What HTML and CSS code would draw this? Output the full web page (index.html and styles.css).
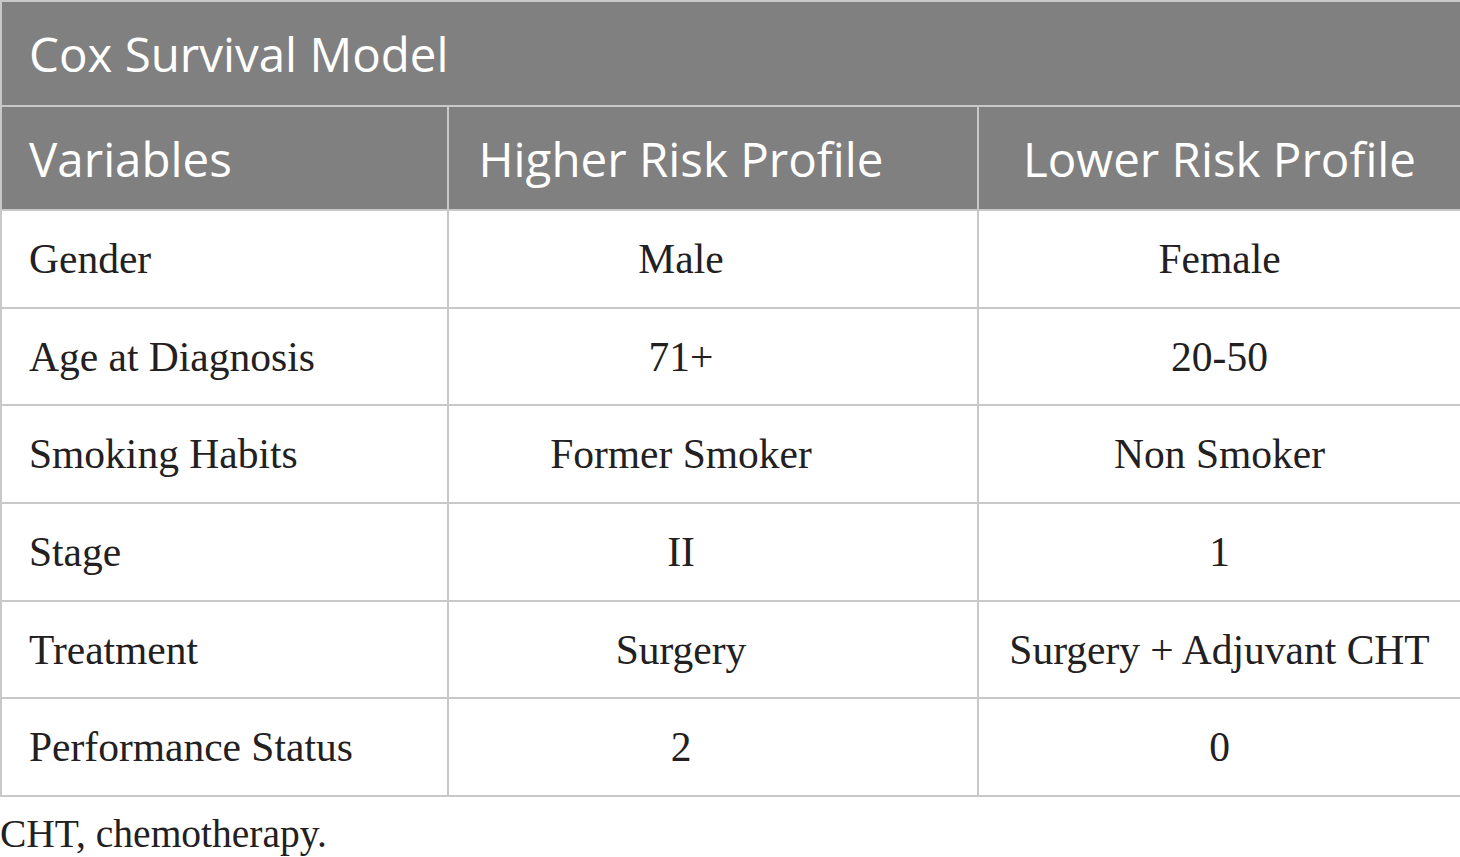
FILE: index.html
```html
<!DOCTYPE html>
<html>
<head>
<meta charset="utf-8">
<link rel="stylesheet" href="styles.css">
</head>
<body>
<table class="cox">
  <colgroup>
    <col class="c1"><col class="c2"><col class="c3">
  </colgroup>
  <thead>
    <tr class="title-row"><th colspan="3" class="title">Cox Survival Model</th></tr>
    <tr class="head-row">
      <th class="left">Variables</th>
      <th class="mid">Higher Risk Profile</th>
      <th class="right">Lower Risk Profile</th>
    </tr>
  </thead>
  <tbody>
    <tr><td class="left">Gender</td><td class="mid">Male</td><td class="right">Female</td></tr>
    <tr><td class="left">Age at Diagnosis</td><td class="mid">71+</td><td class="right">20-50</td></tr>
    <tr><td class="left">Smoking Habits</td><td class="mid">Former Smoker</td><td class="right">Non Smoker</td></tr>
    <tr><td class="left">Stage</td><td class="mid">II</td><td class="right">1</td></tr>
    <tr><td class="left">Treatment</td><td class="mid">Surgery</td><td class="right">Surgery + Adjuvant CHT</td></tr>
    <tr><td class="left">Performance Status</td><td class="mid">2</td><td class="right">0</td></tr>
  </tbody>
</table>
<p class="note">CHT, chemotherapy.</p>
</body>
</html>
```
FILE: styles.css
```css
html, body {
  margin: 0;
  padding: 0;
  background: #ffffff;
}
.cox {
  width: 1460px;
  border-collapse: collapse;
  table-layout: fixed;
  margin: 0;
}
.c1 { width: 447px; }
.c2 { width: 530px; }
.c3 { width: 483px; }
.cox th, .cox td {
  border: 2px solid #c8c8c8;
  padding: 0;
  white-space: nowrap;
}
.cox th {
  background: #808080;
  color: #ffffff;
  font-family: "Open Sans", "Noto Sans", sans-serif;
  font-weight: 400;
  font-size: 47.5px;
  height: 102px;
}
.cox th.title {
  height: 103px;
  text-align: left;
  padding-left: 27px;
}
.cox td {
  font-family: "Liberation Serif", serif;
  font-size: 41.5px;
  color: #222021;
  height: 95.7px;
}
.cox .left {
  text-align: left;
  padding-left: 27px;
}
.cox .mid {
  text-align: center;
  padding-right: 64px;
}
.cox .right {
  text-align: center;
}
.note {
  margin: 14px 0 0 0;
  font-family: "Liberation Serif", serif;
  font-size: 39.5px;
  color: #222021;
}
```
